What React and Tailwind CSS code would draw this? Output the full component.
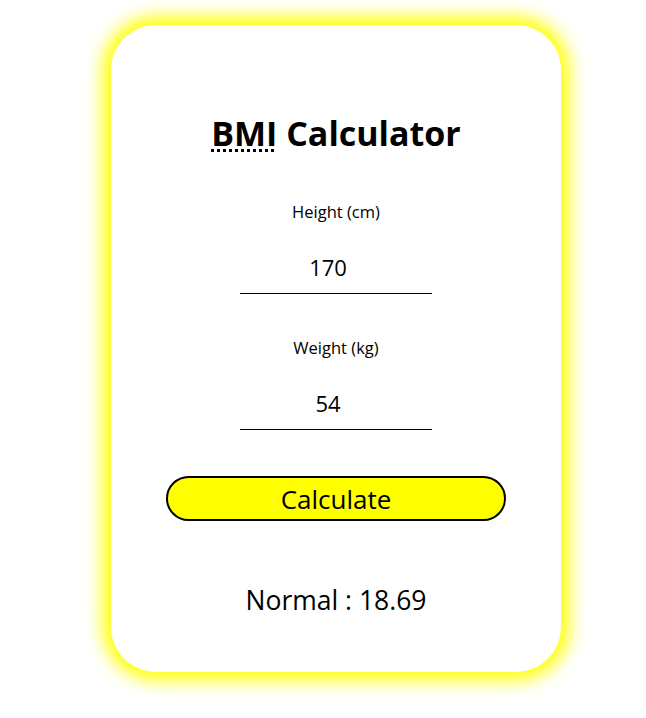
import React, { useState } from "react";

const App = () => {
  const [height, setHeight] = useState("170");
  const [weight, setWeight] = useState("54");
  const [result, setResult] = useState("Normal : 18.69");

  const calculate = () => {
    const h = parseFloat(height) / 100;
    const w = parseFloat(weight);
    if (!h || !w) return;
    const bmi = w / (h * h);
    let label = "Normal";
    if (bmi < 18.5) label = "Underweight";
    else if (bmi >= 25 && bmi < 30) label = "Overweight";
    else if (bmi >= 30) label = "Obese";
    setResult(`${label} : ${bmi.toFixed(2)}`);
  };

  return (
    <div
      className="min-h-screen bg-white flex justify-center pl-[26px] pt-[25px]"
      style={{ fontFamily: '"Open Sans", "Noto Sans", sans-serif' }}
    >
      {/* Card */}
      <div className="w-[450px] h-[647px] bg-white rounded-[45px] shadow-[0_0_18px_8px_#ffff00] flex flex-col items-center pt-[86px] text-black">
        <h1 className="text-[34px] font-bold leading-[44px]">
          <abbr title="Body Mass Index" className="underline decoration-dotted decoration-[3px] underline-offset-[3px]">BMI</abbr> Calculator
        </h1>

        {/* Height */}
        <label className="mt-[46px] text-[16.5px] leading-[22px]">Height (cm)</label>
        <input
          value={height}
          onChange={(e) => setHeight(e.target.value)}
          className="mt-[30px] w-[192px] text-center text-[22px] leading-[28px] pr-4 pb-[12px] border-b border-black outline-none"
        />

        {/* Weight */}
        <label className="mt-[43px] text-[16.5px] leading-[22px]">Weight (kg)</label>
        <input
          value={weight}
          onChange={(e) => setWeight(e.target.value)}
          className="mt-[30px] w-[192px] text-center text-[22px] leading-[28px] pr-4 pb-[12px] border-b border-black outline-none"
        />

        <button
          onClick={calculate}
          className="mt-[46px] w-[340px] h-[45px] bg-[#ffff00] border-2 border-black rounded-full text-[26px] leading-[32px]"
        >
          Calculate
        </button>

        <p className="mt-[62px] text-[26.5px] leading-[34px]">{result}</p>
      </div>
    </div>
  );
};

export default App;
